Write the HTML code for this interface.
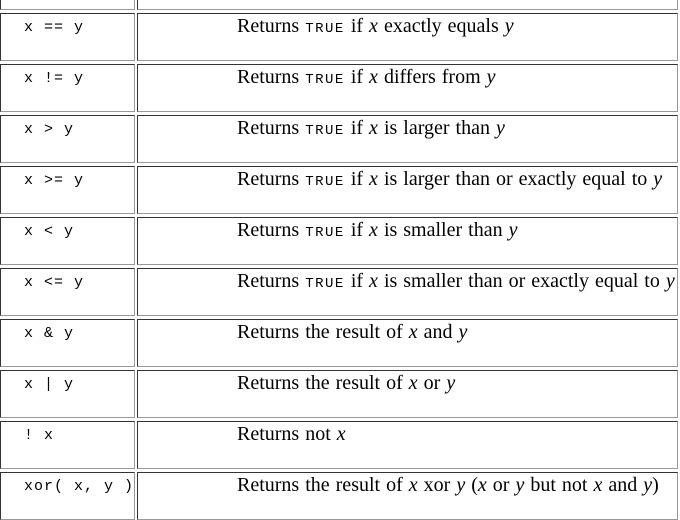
<!DOCTYPE html>
<html><head><style>
body{margin:0;width:680px;height:511px;overflow:hidden;background:#fff;position:relative}
.c{position:absolute;box-sizing:border-box;border:1px solid;border-color:#333 #999 #999 #333;height:48px;overflow:hidden}
.l{left:0;width:135px}
.r{left:137px;width:541px}
.m{position:absolute;left:23px;top:5px;font:15px "Liberation Mono",monospace;white-space:pre;color:#000;letter-spacing:1px}
.t{position:absolute;left:99px;top:1px;font:20px "Liberation Serif",serif;white-space:nowrap;color:#000;word-spacing:1px}
.t code{font:14px "Liberation Mono",monospace;letter-spacing:1.5px;word-spacing:0}
</style></head><body>
<div class="c l" style="top:-38px"></div><div class="c r" style="top:-38px"></div>

<div class="c l" style="top:13px"><span class="m">x == y</span></div>
<div class="c r" style="top:13px"><span class="t">Returns <code>TRUE</code> if <i>x</i> exactly equals <i>y</i></span></div>

<div class="c l" style="top:64px"><span class="m">x != y</span></div>
<div class="c r" style="top:64px"><span class="t">Returns <code>TRUE</code> if <i>x</i> differs from <i>y</i></span></div>

<div class="c l" style="top:115px"><span class="m">x &gt; y</span></div>
<div class="c r" style="top:115px"><span class="t">Returns <code>TRUE</code> if <i>x</i> is larger than <i>y</i></span></div>

<div class="c l" style="top:166px"><span class="m">x &gt;= y</span></div>
<div class="c r" style="top:166px"><span class="t">Returns <code>TRUE</code> if <i>x</i> is larger than or exactly equal to <i>y</i></span></div>

<div class="c l" style="top:217px"><span class="m">x &lt; y</span></div>
<div class="c r" style="top:217px"><span class="t">Returns <code>TRUE</code> if <i>x</i> is smaller than <i>y</i></span></div>

<div class="c l" style="top:268px"><span class="m">x &lt;= y</span></div>
<div class="c r" style="top:268px"><span class="t">Returns <code>TRUE</code> if <i>x</i> is smaller than or exactly equal to <i>y</i></span></div>

<div class="c l" style="top:319px"><span class="m">x &amp; y</span></div>
<div class="c r" style="top:319px"><span class="t">Returns the result of <i>x</i> and <i>y</i></span></div>

<div class="c l" style="top:370px"><span class="m">x | y</span></div>
<div class="c r" style="top:370px"><span class="t">Returns the result of <i>x</i> or <i>y</i></span></div>

<div class="c l" style="top:421px"><span class="m">! x</span></div>
<div class="c r" style="top:421px"><span class="t">Returns not <i>x</i></span></div>

<div class="c l" style="top:472px"><span class="m">xor( x, y )</span></div>
<div class="c r" style="top:472px"><span class="t">Returns the result of <i>x</i> xor <i>y</i> (<i>x</i> or <i>y</i> but not <i>x</i> and <i>y</i>)</span></div>
</body></html>
